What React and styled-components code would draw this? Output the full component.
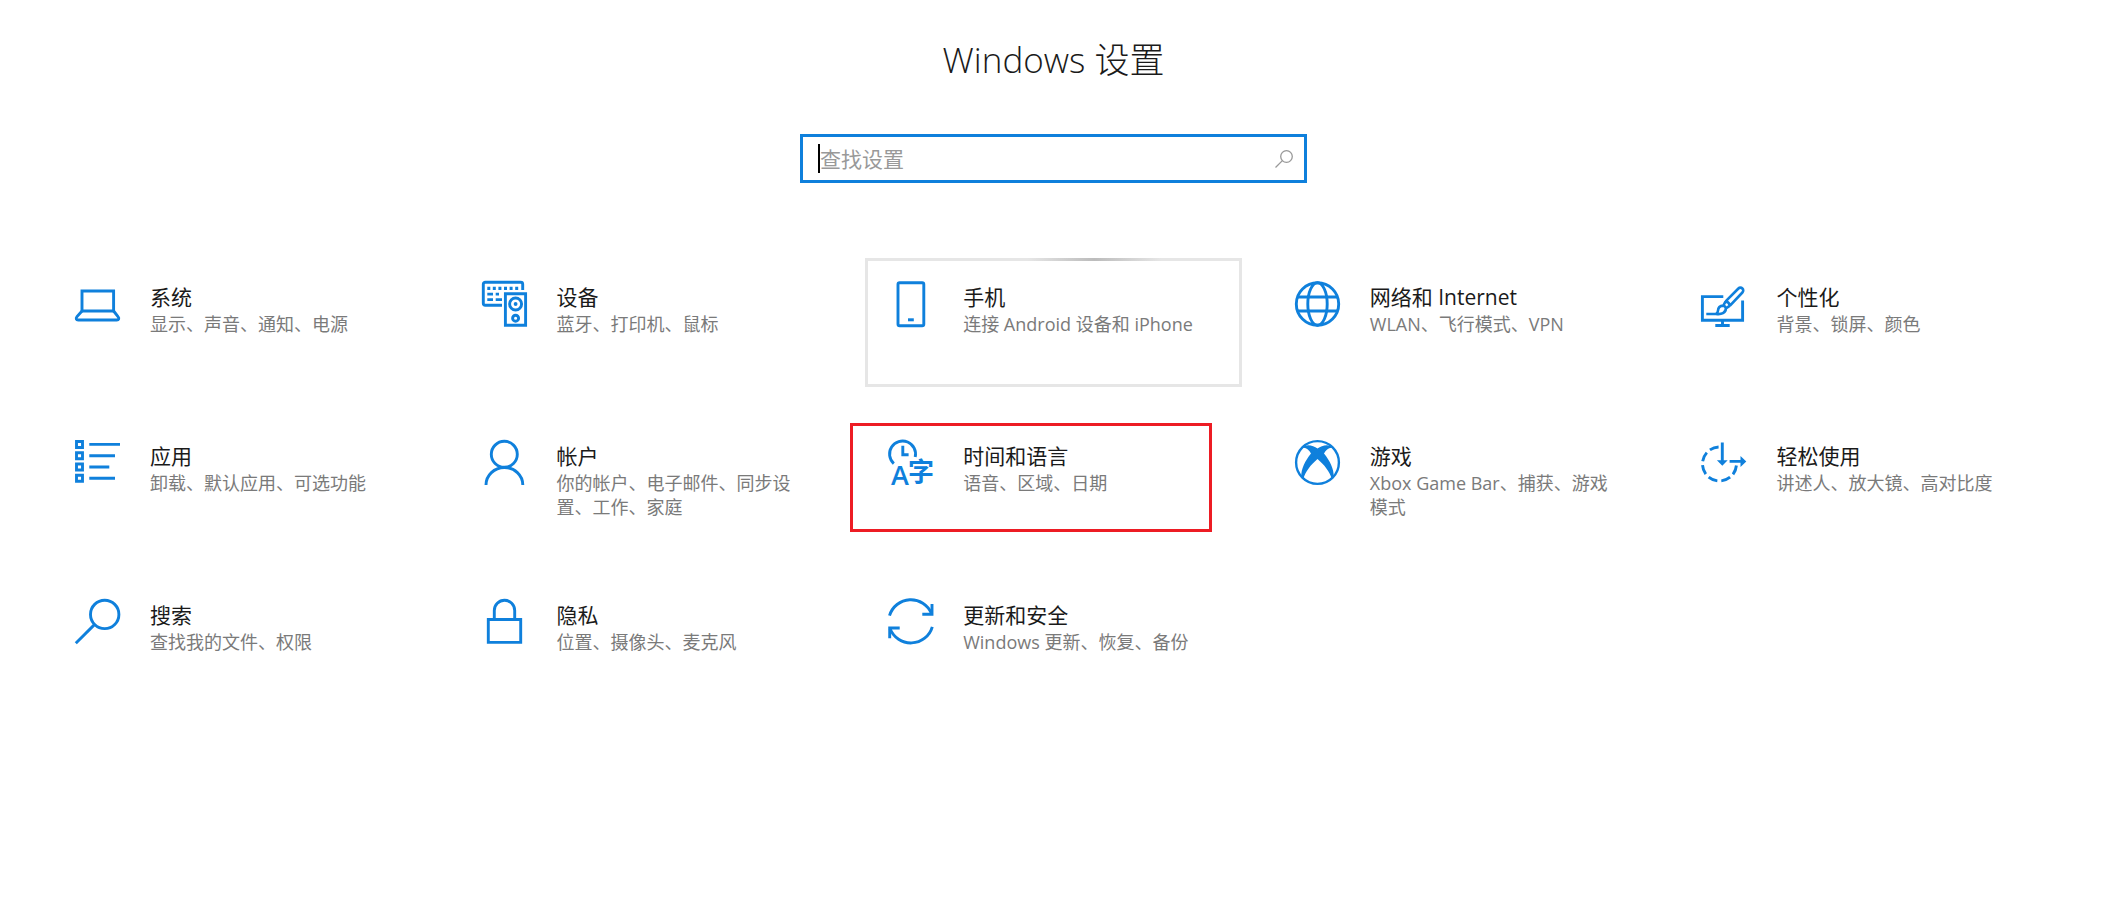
import React from 'react';
import styled, { createGlobalStyle } from 'styled-components';

const GlobalStyle = createGlobalStyle`
  :root {
    --c-accent: #0f80dc;
    --c-text: #1a1a1a;
    --c-muted: #7a7a7a;
    --c-hint: #999999;
    --c-hover: #e6e6e6;
    --c-mark: #ed1c24;
    --f-ui: "Open Sans", "Noto Sans CJK SC", sans-serif;
  }

  *, *::before, *::after {
    box-sizing: border-box;
  }

  body {
    margin: 0;
    background-color: #ffffff;
    color: var(--c-text);
    font-family: var(--f-ui);
  }
`;

const PageMain = styled.main`
  display: flex;
  flex-direction: column;
  align-items: center;
  padding: 36px 52px;
`;

const PageTitle = styled.h1`
  margin: 0 0 50px;
  font-size: 35px;
  line-height: 48px;
  font-weight: 300;
`;

const SearchLabel = styled.label`
  display: flex;
  align-items: center;
  width: 100%;
  max-width: 507px;
  height: 49px;
  padding: 0 10px 0 15px;
  border: 3px solid var(--c-accent);
  cursor: text;
`;

const Caret = styled.span`
  width: 2px;
  height: 29px;
  background-color: #000000;
`;

const SearchInput = styled.input`
  flex: 1;
  min-width: 0;
  padding: 0;
  border: 0;
  outline: 0;
  background: transparent;
  color: var(--c-text);
  caret-color: transparent;
  font-family: var(--f-ui);
  font-size: 21px;
  line-height: 28px;

  &::placeholder {
    color: var(--c-hint);
    opacity: 1;
  }
`;

const SearchGlyph = styled.svg`
  width: 20px;
  height: 20px;
  fill: none;
  stroke: var(--c-hint);
  stroke-width: 1.3;
`;

const TileNav = styled.nav`
  display: grid;
  grid-template-columns: repeat(5, minmax(0, 1fr));
  gap: 30px;
  width: 100%;
  margin-top: 75px;

  @media (max-width: 1500px) {
    grid-template-columns: repeat(auto-fill, minmax(340px, 1fr));
  }
`;

const Tile = styled.a`
  position: relative;
  display: flex;
  gap: 30px;
  min-height: 129px;
  padding: 20px 27px 20px 20px;
  border: 3px solid ${(props) => (props.$hovered ? 'var(--c-hover)' : 'transparent')};
  color: inherit;
  text-decoration: none;
`;

// light reveal that runs along the top border of the hovered tile
const Reveal = styled.span`
  position: absolute;
  top: -3px;
  left: 43%;
  width: 36%;
  height: 3px;
  background: linear-gradient(90deg, var(--c-hover), #bcbcbc, var(--c-hover));
`;

const MarkFrame = styled.span`
  position: absolute;
  inset: 3px 27px 11px -18px;
  border: 3px solid var(--c-mark);
`;

const TileIcon = styled.svg`
  flex: none;
  width: 45px;
  height: 45px;
  overflow: visible;
  fill: none;
  stroke: var(--c-accent);
  stroke-width: 2.9;

  .solid {
    fill: var(--c-accent);
    stroke: none;
  }

  text {
    fill: var(--c-accent);
    stroke: none;
    font-family: var(--f-ui);
    font-weight: 600;
  }
`;

const TileCopy = styled.div`
  flex: 1;
  min-width: 0;
  padding-top: 1px;
`;

const TileTitle = styled.h2`
  margin: 0;
  font-size: 21px;
  line-height: 30px;
  font-weight: 400;
`;

const TileText = styled.p`
  margin: 0;
  color: var(--c-muted);
  font-size: 18px;
  line-height: 24px;
`;

const icons = {
  system: (
    <>
      <path d="M7 30V10h31.6v20z" />
      <path d="M7 30L2 35.6C.6 37.3 1.2 39 3.2 39h38.6c2 0 2.6-1.7 1.2-3.4L38.6 30" />
    </>
  ),
  devices: (
    <>
      <path d="M20 24.3H3.3a2 2 0 0 1-2-2V3.3a2 2 0 0 1 2-2h35.4a2 2 0 0 1 2 2V9" />
      <path
        className="solid"
        d="M5.3 5.8h3V9h-3zM10.8 5.8h3V9h-3zM16.4 5.8h3V9h-3zM22 5.8h3V9h-3zM27.6 5.8h3V9h-3zM33.2 5.8h3V9h-3zM5.3 11.7H11v2.8H5.3zM13.7 11.7H17v2.8h-3.3zM5.3 17.2H11V20H5.3zM13.7 17.2H20V20h-6.3z"
      />
      <path d="M23.4 12.7h20.2v31.5H23.4z" />
      <circle cx="33.6" cy="23" r="6" />
      <circle className="solid" cx="33.6" cy="23" r="1.9" />
      <circle cx="33.6" cy="37.2" r="3" />
    </>
  ),
  phone: (
    <>
      <rect x="10" y="1.8" width="25.8" height="43" rx="1.6" />
      <path className="solid" d="M20 37.3h5.8v3H20z" />
    </>
  ),
  network: (
    <>
      <circle cx="22.5" cy="23" r="21.2" />
      <ellipse cx="22.5" cy="23" rx="9.7" ry="21.2" />
      <path d="M2.5 16h40M2.5 30h40" />
    </>
  ),
  personalization: (
    <>
      <path d="M22.3 15.6H1.4v23.6h40.2V19.5" />
      <path d="M21.5 39.5v5M14.3 44.5h14.4" />
      <path
        d="M24.6 20.4L37.4 7.5a2.8 2.8 0 0 1 4 4L29 24.7M24.6 20.4c2.2.4 3.8 2 4.4 4.3M24.6 20.4l-2.3 4.2M29 24.7l-4.1 2.7M22.3 24.6c1.4.4 2.3 1.3 2.6 2.8M22.3 24.6c-3.6.3-5.2 2-5.3 5 0 1.8-.8 2.7-2 3.3 5.5.8 9.8-.9 9.9-5.5M5.3 33h12"
        strokeWidth="2.6"
      />
    </>
  ),
  apps: (
    <>
      <path d="M1.5 1.5h6v6h-6zM1.5 12.7h6v6h-6zM1.5 24h6v6h-6zM1.5 35.3h6v6h-6z" />
      <path d="M14.3 4.4H45M14.3 15.7H40M14.3 27h20M14.3 38.3H40" />
    </>
  ),
  accounts: (
    <>
      <circle cx="22.3" cy="14.3" r="13" />
      <path d="M4 45a18.4 17.5 0 0 1 36.8 0" />
    </>
  ),
  language: (
    <>
      <path d="M5.8 23.6A13 13 0 1 1 27.2 17" />
      <path d="M14.8 5.7v9h5.8" />
      <text x="3" y="45" fontSize="27">A</text>
      <text x="20" y="41" fontSize="26">字</text>
    </>
  ),
  gaming: (
    <>
      <circle cx="22.5" cy="22.5" r="21.4" strokeWidth="2.4" />
      <path
        className="solid"
        d="M7 8C11 7 14 10 16 13.5 10 21 6 29 6.3 36.5L8.5 38.5C10 32 16 24.5 22.5 19 29 24.5 35 32 36.5 38.5L38.7 36.5C39 29 35 21 29 13.5 31 10 34 7 38 8 34 3.5 27 5.5 22.5 8.5 18 5.5 11 3.5 7 8z"
      />
    </>
  ),
  access: (
    <>
      <path d="M35.4 25.5A17 17 0 1 1 17.6 7" strokeDasharray="9.5 4.1" />
      <path d="M21.3 2.4V21M28.6 21.4H41" />
      <path className="solid" d="M15.9 20.2h10.8l-5.4 5.6zM39.5 15.9v11l5.8-5.5z" />
    </>
  ),
  search: (
    <>
      <circle cx="29.7" cy="15.4" r="14.2" />
      <path d="M19.7 25.4L.8 44.3" />
    </>
  ),
  privacy: (
    <>
      <path d="M6.3 20.5h32.4v22.9H6.3zM12.3 20.5v-9a10.2 10.2 0 0 1 20.4 0v9" />
    </>
  ),
  update: (
    <>
      <path d="M1.5 16.7A22.3 22.3 0 0 1 43.5 14.5M44.3 27.8A22.3 22.3 0 0 1 2 29.5" />
      <path d="M44 5v10.3h-9.7M1.7 39.3V29h10" />
    </>
  ),
};

const settings = [
  { icon: 'system', title: '系统', text: '显示、声音、通知、电源' },
  { icon: 'devices', title: '设备', text: '蓝牙、打印机、鼠标' },
  { icon: 'phone', title: '手机', text: '连接 Android 设备和 iPhone', hovered: true },
  { icon: 'network', title: '网络和 Internet', text: 'WLAN、飞行模式、VPN' },
  { icon: 'personalization', title: '个性化', text: '背景、锁屏、颜色' },
  { icon: 'apps', title: '应用', text: '卸载、默认应用、可选功能' },
  { icon: 'accounts', title: '帐户', text: '你的帐户、电子邮件、同步设置、工作、家庭' },
  { icon: 'language', title: '时间和语言', text: '语音、区域、日期', marked: true },
  { icon: 'gaming', title: '游戏', text: 'Xbox Game Bar、捕获、游戏模式' },
  { icon: 'access', title: '轻松使用', text: '讲述人、放大镜、高对比度' },
  { icon: 'search', title: '搜索', text: '查找我的文件、权限' },
  { icon: 'privacy', title: '隐私', text: '位置、摄像头、麦克风' },
  { icon: 'update', title: '更新和安全', text: 'Windows 更新、恢复、备份' },
];

const SettingTile = ({ icon, title, text, hovered, marked }) => {
  return (
    <Tile href={`#${icon}`} $hovered={hovered}>
      {hovered && <Reveal />}
      {marked && <MarkFrame />}
      <TileIcon viewBox="0 0 45 45" aria-hidden="true">
        {icons[icon]}
      </TileIcon>
      <TileCopy>
        <TileTitle>{title}</TileTitle>
        <TileText>{text}</TileText>
      </TileCopy>
    </Tile>
  );
};

const App = () => {
  return (
    <>
      <GlobalStyle />
      <PageMain lang="zh-CN">
        <PageTitle>Windows 设置</PageTitle>
        <SearchLabel htmlFor="settings-search">
          <Caret />
          <SearchInput
            id="settings-search"
            type="text"
            placeholder="查找设置"
            aria-label="查找设置"
          />
          <SearchGlyph viewBox="0 0 20 20" aria-hidden="true">
            <circle cx="12.5" cy="7.5" r="5.8" />
            <path d="M8.4 11.6L1.5 18.5" />
          </SearchGlyph>
        </SearchLabel>
        <TileNav>
          {settings.map((item) => (
            <SettingTile key={item.icon} {...item} />
          ))}
        </TileNav>
      </PageMain>
    </>
  );
};

export default App;
